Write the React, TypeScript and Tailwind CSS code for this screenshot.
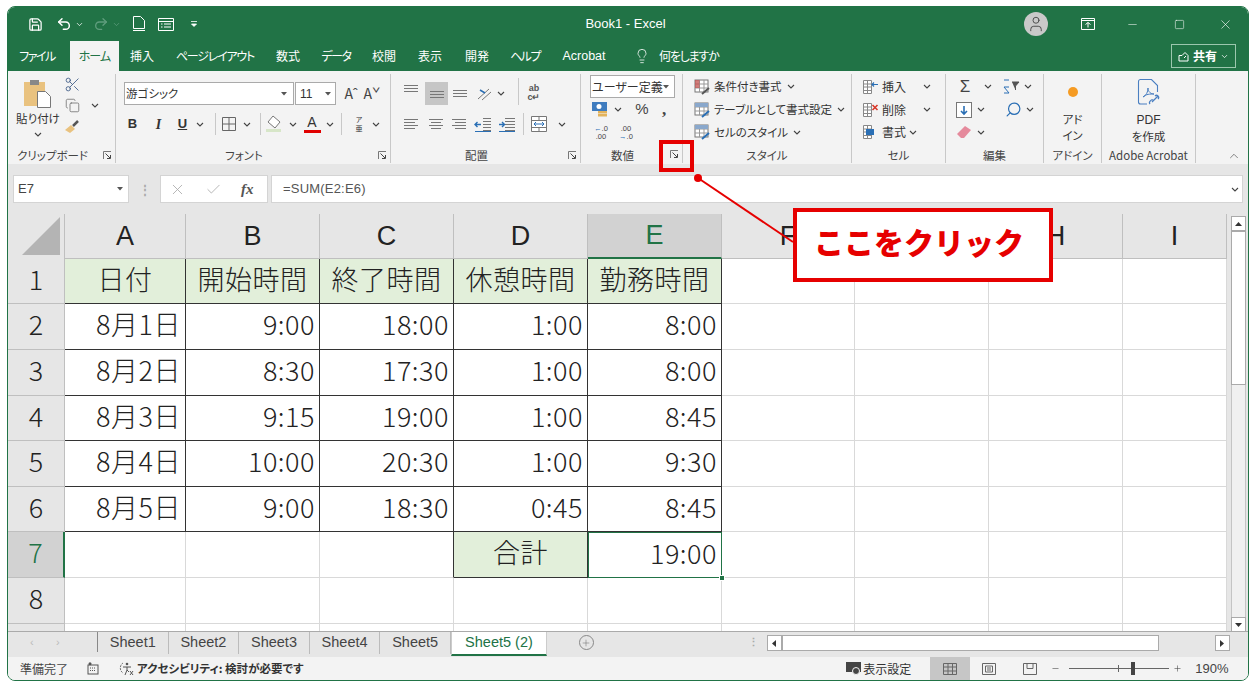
import { ChevronDown, ChevronUp, Copy, Lightbulb, Minus, Plus, Redo2, Save, Scissors, Search, Square, Undo2, User, X, Check } from "lucide-react"

const Chev = ({ className = "" }: { className?: string }) => (
  <svg width="8" height="5" viewBox="0 0 8 5" className={className}>
    <path d="M1 1l3 3 3-3" fill="none" stroke="#444" strokeWidth="1.1" />
  </svg>
)

const Caret = () => (
  <svg width="6" height="4" viewBox="0 0 6 4">
    <path d="M0 0h6L3 3.5z" fill="#555" />
  </svg>
)

const Launcher = () => (
  <svg width="9" height="9" viewBox="0 0 9 9">
    <path d="M.5 8V.5H8" fill="none" stroke="#777" />
    <path d="M2.5 2.5L7 7M7.5 4v3.5H4" fill="none" stroke="#444" />
  </svg>
)

// text-alignment glyph: mode picks the line widths / vertical position
const Lines = ({ mode }: { mode: "top" | "mid" | "bot" | "left" | "center" | "right" }) => {
  const ys = mode === "top" ? [2, 5, 8] : mode === "bot" ? [6, 9, 12] : mode === "mid" ? [4, 7, 10] : [2, 5, 8, 11]
  return (
    <svg width="16" height="14" viewBox="0 0 16 14">
      {ys.map((y, i) => {
        const short = i % 2 === 1 && ["left", "center", "right"].includes(mode)
        const x1 = mode === "right" && short ? 4 : mode === "center" && short ? 3 : 1
        const x2 = mode === "left" && short ? 12 : mode === "center" && short ? 13 : 15
        return <path key={y} d={`M${x1} ${y + 0.5}H${x2}`} stroke="#777" />
      })}
    </svg>
  )
}

const Indent = ({ flip }: { flip?: boolean }) => (
  <svg width="18" height="15" viewBox="0 0 18 15">
    {[1, 4, 7, 10, 13].map((y) => (
      <path key={y} d={`M${flip ? 9 : 7} ${y + 0.5}H17`} stroke="#777" />
    ))}
    <path d={flip ? "M1 7.500h6M3.500 5L1 7.500 3.500 10" : "M1 7.500h5M4 5l2.500 2.500L4 10"} fill="none" stroke="#2a6fb5" strokeWidth="1.4" />
    <path d="M1 14.500h16" stroke="#2a6fb5" />
  </svg>
)

const SheetIcon = ({ kind }: { kind: "cond" | "table" | "style" }) => (
  <svg width="17" height="16" viewBox="0 0 17 16">
    <rect x="1" y="1" width="13" height="12" fill="#fff" stroke="#777" />
    <path d="M1 5h13M1 9h13M5.500 1v12M10 1v12" stroke="#999" />
    {kind === "cond" && <rect x="1" y="1" width="4.500" height="8" fill="#c0504d" opacity=".75" />}
    {kind !== "cond" && <rect x="1" y="1" width="13" height="4" fill="#8aa8cc" />}
    <path d="M8 15l7-6" stroke={kind === "cond" ? "#555" : "#2a6fb5"} strokeWidth="2" />
  </svg>
)

const CellIcon = ({ kind }: { kind: "ins" | "del" | "fmt" }) => (
  <svg width="17" height="16" viewBox="0 0 17 16">
    <path d="M1.500 1.500h8v13h-8zM1.500 5h8M1.500 8h8M1.500 11.500h8M5.500 1.500v13" fill="#fff" stroke="#888" />
    {kind === "ins" && <path d="M10 5.500h6M12 3.500l-2 2 2 2" fill="none" stroke="#2a6fb5" strokeWidth="1.2" />}
    {kind === "del" && <path d="M10.500 3l5 5M15.500 3l-5 5" stroke="#d8392b" strokeWidth="1.600" />}
    {kind === "fmt" && <rect x="4" y="5" width="8" height="6" fill="#2a6fb5" />}
  </svg>
)

function Group({ w, label, launcher, offset, children }: { w: string; label: string; launcher?: boolean; offset?: boolean; children: React.ReactNode }) {
  return (
    <div className={`${w} relative flex h-[89px] shrink-0 flex-col border-r border-[#c8c8c8]`}>
      <div className="flex-1">{children}</div>
      <div className={`relative h-[18px] text-center text-[11.5px] leading-[20px] text-[#444] ${launcher || offset ? "pr-[18px]" : ""}`}>
        {label}
        {launcher && (
          <span className="absolute right-[3px] top-[6px] flex">
            <Launcher />
          </span>
        )}
      </div>
    </div>
  )
}

function Ribbon() {
  return (
    <div className="flex h-[93px] shrink-0 bg-[#f3f3f3] pt-[3px] text-[12px] text-[#333]">
      <Group w="w-[108px]" label="クリップボード" launcher>
        <div className="flex">
          <div className="flex w-[60px] flex-col items-center pt-[5px]">
            <svg width="30" height="30" viewBox="0 0 30 30">
              <rect x="1" y="3" width="21" height="24" fill="#e9c27f" />
              <rect x="7" y="1" width="9" height="5" fill="#888" />
              <path d="M14.500 12.500h8l5 5v11h-13z" fill="#fff" stroke="#777" />
            </svg>
            <div className="mt-[1px] text-[11.5px] leading-[17px]">貼り付け</div>
            <Chev className="mt-[5px]" />
          </div>
          <div className="-ml-[6px] flex w-[20px] flex-col items-center gap-[5px] pt-[2px]">
            <Scissors size={17} strokeWidth={1.2} className="text-[#3c5a85]" />
            <Copy size={15} strokeWidth={1.2} className="text-[#666]" />
            <svg width="17" height="17" viewBox="0 0 17 17">
              <path d="M1 12l6-5 4 4-5 4z" fill="#e9c27f" />
              <path d="M9 8l5-5" stroke="#555" strokeWidth="2.500" />
            </svg>
          </div>
          <div className="flex w-[25px] justify-center pt-[29px]">
            <span>
              <Chev />
            </span>
          </div>
        </div>
      </Group>

      <Group w="w-[275px]" label="フォント" launcher>
        <div className="flex h-[31px] items-end pl-[8px]">
          <div className="flex h-[23px] w-[170px] items-center justify-between border border-[#aaa] bg-white pl-[1px] pr-[6px] text-[11.5px]">
            游ゴシック
            <Caret />
          </div>
          <div className="ml-[1px] flex h-[23px] w-[41px] items-center justify-between border border-[#aaa] bg-white px-[4px] font-['Liberation_Sans'] text-[12px]">
            11
            <Caret />
          </div>
          <div className="flex h-[23px] w-[24px] items-center justify-center pl-[6px] text-[14px] text-[#444]">Aˆ</div>
          <div className="ml-[1px] flex h-[23px] w-[22px] items-center justify-center text-[14px] text-[#444]">Aˇ</div>
        </div>
        <div className="mt-[7px] flex h-[24px] items-center pl-[8px] font-['Liberation_Sans'] text-[#333]">
          <span className="w-[17px] text-center text-[13px] font-bold">B</span>
          <span className="ml-[9px] w-[17px] text-center font-['Liberation_Serif'] text-[14px] font-bold italic">I</span>
          <span className="ml-[7px] w-[17px] text-center text-[13px] font-bold underline">U</span>
          <Chev className="ml-[5px]" />
          <span className="ml-[11px] h-[22px] border-l border-[#c8c8c8]" />
          <svg width="16" height="16" viewBox="0 0 16 16" className="ml-[5px]">
            <path d="M1.500 1.500h13v13h-13zM8 1.500v13M1.500 8h13" fill="none" stroke="#666" />
          </svg>
          <Chev className="ml-[6px]" />
          <span className="ml-[9px] h-[22px] border-l border-[#c8c8c8]" />
          <svg width="18" height="18" viewBox="0 0 18 18" className="ml-[4px]">
            <path d="M8 1l7 6-5 6-7-6z" fill="#fff" stroke="#777" />
            <path d="M1 15.500h15" stroke="#d7e6c8" strokeWidth="3" />
          </svg>
          <Chev className="ml-[6px]" />
          <span className="ml-[7px] flex w-[16px] flex-col items-center text-[14px] leading-[14px]">
            A
            <span className="mt-[1px] h-[3px] w-[17px] bg-[#e00000]" />
          </span>
          <Chev className="ml-[6px]" />
          <span className="ml-[7px] h-[22px] border-l border-[#c8c8c8]" />
          <span className="ml-[11px] w-[12px] text-center font-['Noto_Sans_CJK_JP'] text-[7px] leading-[9px]">
            ア<br />亜
          </span>
          <Chev className="ml-[7px]" />
        </div>
      </Group>

      <Group w="w-[190px]" label="配置" launcher>
        <div className="flex h-[31px] items-end pl-[11px]">
          <span className="flex h-[23px] w-[18px] justify-center pt-[1px]">
            <Lines mode="top" />
          </span>
          <span className="ml-[5px] flex h-[23px] w-[23px] items-center justify-center bg-[#c6c6c6]">
            <Lines mode="mid" />
          </span>
          <span className="ml-[3px] flex h-[21px] w-[18px] justify-center">
            <Lines mode="bot" />
          </span>
          <span className="ml-[7px] flex h-[23px] w-[18px] items-center justify-center text-[11px] text-[#777]">
            <svg width="18" height="14" viewBox="0 0 18 14">
              <path d="M2 12l11-10M6 13l9-8" stroke="#777" />
              <path d="M4 3l5 3" stroke="#2a6fb5" strokeWidth="1.500" />
            </svg>
          </span>
          <span className="flex h-[23px] items-center pl-[3px]">
            <Chev />
          </span>
          <span className="ml-[13px] h-[27px] border-l border-[#c8c8c8]" />
          <span className="ml-[7px] w-[16px] pb-[3px] text-center font-['Liberation_Sans'] text-[9px] font-bold leading-[9px] text-[#555]">
            ab
            <br />c↵
          </span>
        </div>
        <div className="mt-[7px] flex h-[24px] items-center pl-[11px]">
          <span className="flex w-[18px] justify-center">
            <Lines mode="left" />
          </span>
          <span className="ml-[7px] flex w-[18px] justify-center">
            <Lines mode="center" />
          </span>
          <span className="ml-[5px] flex w-[18px] justify-center">
            <Lines mode="right" />
          </span>
          <span className="ml-[6px] flex">
            <Indent flip />
          </span>
          <span className="ml-[6px] flex">
            <Indent />
          </span>
          <span className="ml-[7px] h-[22px] border-l border-[#c8c8c8]" />
          <svg width="16" height="16" viewBox="0 0 16 16" className="ml-[7px]">
            <path d="M.500.500h15v15H.500zM.500 4.500h15M.500 11.500h15M8 .500v4M8 11.500v4" fill="#fff" stroke="#777" />
            <path d="M3 8h10M5 6L3 8l2 2M11 6l2 2-2 2" fill="none" stroke="#2a6fb5" />
          </svg>
          <Chev className="ml-[11px]" />
        </div>
      </Group>

      <Group w="w-[102px]" label="数値" offset>
        <div className="flex h-[24px] items-end pl-[9px]">
          <div className="flex h-[23px] w-[85px] items-center justify-between border border-[#aaa] bg-white pl-[1px] pr-[5px] text-[12px]">
            ユーザー定義
            <Caret />
          </div>
        </div>
        <div className="flex h-[23px] items-center pl-[10px]">
          <svg width="18" height="17" viewBox="0 0 18 17">
            <rect x="1" y="1" width="15" height="9" fill="#3f7cbf" />
            <circle cx="8" cy="5.500" r="2.500" fill="#fff" />
            <rect x="7" y="10" width="9" height="2.500" fill="#e3b35b" />
            <rect x="7" y="13" width="9" height="2.500" fill="#e3b35b" />
          </svg>
          <Chev className="ml-[5px]" />
          <span className="ml-[8px] w-[24px] text-center font-['Liberation_Sans'] text-[15px] text-[#444]">%</span>
          <span className="ml-[8px] font-['Liberation_Serif'] text-[17px] font-bold leading-[17px] text-[#444]">,</span>
        </div>
        <div className="flex h-[23px] items-center pl-[10px] font-['Liberation_Sans'] text-[7.500px] leading-[8px] text-[#444]">
          <span className="w-[20px] text-center">
            <span className="text-[#2a6fb5]">←</span>.0
            <br />
            .00
          </span>
          <span className="ml-[5px] w-[20px] text-center">
            .00
            <br />
            <span className="text-[#2a6fb5]">→</span>.0
          </span>
        </div>
        <span className="absolute bottom-[4px] right-[3px] flex">
          <Launcher />
        </span>
      </Group>

      <Group w="w-[169px]" label="スタイル">
        <div className="flex flex-col pl-[11px] pt-[1px] text-[11.5px] leading-[23px]">
          <div className="flex h-[23px] items-center gap-[3px]">
            <SheetIcon kind="cond" />
            条件付き書式
            <Chev className="ml-[2px]" />
          </div>
          <div className="flex h-[23px] items-center gap-[3px]">
            <SheetIcon kind="table" />
            テーブルとして書式設定
            <Chev className="ml-[2px]" />
          </div>
          <div className="flex h-[22px] items-center gap-[3px]">
            <SheetIcon kind="style" />
            セルのスタイル
            <Chev className="ml-[2px]" />
          </div>
        </div>
      </Group>

      <Group w="w-[94px]" label="セル">
        <div className="flex flex-col pl-[10px] pt-[1px] text-[12px]">
          <div className="flex h-[23px] items-center">
            <CellIcon kind="ins" />
            <span className="ml-[3px] w-[41px]">挿入</span>
            <Chev />
          </div>
          <div className="flex h-[23px] items-center">
            <CellIcon kind="del" />
            <span className="ml-[3px] w-[41px]">削除</span>
            <Chev />
          </div>
          <div className="flex h-[22px] items-center">
            <CellIcon kind="fmt" />
            <span className="ml-[3px]">書式</span>
            <Chev className="ml-[3px]" />
          </div>
        </div>
      </Group>

      <Group w="w-[98px]" label="編集">
        <div className="flex flex-col pl-[10px] pt-[1px]">
          <div className="flex h-[23px] items-center">
            <span className="w-[18px] text-center font-['Liberation_Sans'] text-[17px] leading-[17px] text-[#444]">Σ</span>
            <Chev className="ml-[10px]" />
            <svg width="20" height="16" viewBox="0 0 20 16" className="ml-[10px]">
              <path d="M10 3h7l-3.500 4v4" fill="#555" stroke="#555" />
              <path d="M2 1h5M2 14h5L2 8h5" fill="none" stroke="#2a6fb5" />
            </svg>
            <Chev className="ml-[2px]" />
          </div>
          <div className="flex h-[23px] items-center">
            <svg width="16" height="16" viewBox="0 0 16 16">
              <rect x=".5" y=".5" width="15" height="15" fill="#fff" stroke="#777" />
              <path d="M8 4v8M5 9l3 3 3-3" fill="none" stroke="#2a6fb5" strokeWidth="1.600" />
            </svg>
            <Chev className="ml-[5px]" />
            <Search size={17} strokeWidth={1.7} className="ml-[20px] scale-x-[-1] text-[#2a6fb5]" />
            <Chev className="ml-[4px]" />
          </div>
          <div className="flex h-[22px] items-center">
            <svg width="16" height="14" viewBox="0 0 16 14">
              <path d="M1 9l8-8 6 4-7 8H5z" fill="#e58a9c" />
            </svg>
            <Chev className="ml-[5px]" />
          </div>
        </div>
      </Group>

      <Group w="w-[58px]" label="アドイン">
        <div className="flex flex-col items-center pt-[13px] text-[11.500px] leading-[16px]">
          <span className="h-[10px] w-[10px] rounded-full bg-[#f59b23]" />
          <span className="mt-[14px]">アド</span>
          <span>イン</span>
        </div>
      </Group>

      <Group w="w-[94px]" label="Adobe Acrobat">
        <div className="flex flex-col items-center pt-[4px] text-[11.500px] leading-[16px]">
          <svg width="28" height="29" viewBox="0 0 28 29">
            <path d="M12 26H5.500a2 2 0 0 1-2-2V3.500a2 2 0 0 1 2-2h11l6 6V14" fill="none" stroke="#4a7fc1" strokeWidth="1.100" />
            <path d="M8 19c3-1 5-5 5-9 0 4 3 6 6 6-4 0-8 0-11 3z" fill="none" stroke="#4a7fc1" />
            <path d="M17 24l6-6m-8 8c-2-2 2-5 3-4m5-1c2-2-1-5-3-3" fill="none" stroke="#4a7fc1" strokeWidth="1.200" />
          </svg>
          <span className="mt-[5px] font-['Liberation_Sans'] text-[12px]">PDF</span>
          <span>を作成</span>
        </div>
      </Group>

      <div className="flex flex-1 items-end justify-end pb-[1px] pr-[7px]">
        <ChevronUp size={14} strokeWidth={1.2} className="text-[#555]" />
      </div>
    </div>
  )
}

const columns = ["A", "B", "C", "D", "E", "F", "G", "H", "I"]

type Row = { date: string; values: string[] }
const rows: Row[] = [
  { date: "8月1日", values: ["9:00", "18:00", "1:00", "8:00"] },
  { date: "8月2日", values: ["8:30", "17:30", "1:00", "8:00"] },
  { date: "8月3日", values: ["9:15", "19:00", "1:00", "8:45"] },
  { date: "8月4日", values: ["10:00", "20:30", "1:00", "9:30"] },
  { date: "8月5日", values: ["9:00", "18:30", "0:45", "8:45"] },
]

const rowHeader = "flex items-center justify-center border-b border-r border-[#bfbfbf] bg-[#e6e6e6] pb-[4px]"
const blank = "border-b border-r border-[#d9d9d9] bg-white"
const dark = "flex items-center border-b border-r border-[#333] bg-white pb-[4px] pr-[4px] tracking-[0.5px]"

function Sheet() {
  return (
    <div className="grid h-[417px] shrink-0 grid-cols-[57px_121px_134px_134px_134px_134px_133px_134px_134px_104px_1fr] grid-rows-[45px_45px_46px_46px_45px_46px_45px_46px_46px_7px] bg-[#e6e6e6] text-[27px] font-light text-[#222]">
      <div className="flex items-end justify-end border-r border-[#bfbfbf] pb-[4px] pr-[4px]">
        <span className="h-0 w-0 border-b-[38px] border-l-[38px] border-b-[#b4b4b4] border-l-transparent" />
      </div>
      {columns.map((c) => (
        <div
          key={c}
          className={
            c === "E"
              ? "flex items-center justify-center border-b-2 border-r border-b-[#217346] border-r-[#bfbfbf] bg-[#d2d2d2] font-['Liberation_Sans'] text-[#217346]"
              : "flex items-center justify-center border-b border-r border-[#bfbfbf] font-['Liberation_Sans']"
          }
        >
          {c}
        </div>
      ))}
      <div className="row-span-10 relative border-l border-[#e6e6e6]">
        <div className="absolute left-[3px] top-[2px] flex h-[15px] w-[15px] items-center justify-center border border-[#aaa] bg-white">
          <svg width="7" height="4" viewBox="0 0 7 4"><path d="M0 4h7L3.500 0z" fill="#333" /></svg>
        </div>
        <div className="absolute left-[3px] top-[18px] h-[385px] w-[15px] border-x border-[#c4c4c4] bg-[#f0f0f0]" />
        <div className="absolute left-[3px] top-[17px] h-[154px] w-[15px] border border-[#aaa] bg-white" />
        <div className="absolute bottom-[-1px] left-[3px] flex h-[15px] w-[15px] items-center justify-center border border-[#aaa] bg-white">
          <svg width="7" height="4" viewBox="0 0 7 4"><path d="M0 0h7L3.500 4z" fill="#333" /></svg>
        </div>
      </div>

      <div className={rowHeader}>1</div>
      {["日付", "開始時間", "終了時間", "休憩時間", "勤務時間"].map((h) => (
        <div key={h} className="flex items-center justify-center border-b border-r border-[#333] bg-[#e2efda] pb-[4px] tracking-[0.5px]">
          {h}
        </div>
      ))}
      {[0, 1, 2, 3].map((i) => (
        <div key={i} className={blank} />
      ))}

      {rows.map((r, i) => (
        <div key={r.date} className="contents">
          <div className={rowHeader}>{i + 2}</div>
          <div className={`${dark} justify-end border-l-[#333]`}>{r.date}</div>
          {r.values.map((v, j) => (
            <div key={j} className={`${dark} justify-end`}>
              {v}
            </div>
          ))}
          {[0, 1, 2, 3].map((k) => (
            <div key={k} className={blank} />
          ))}
        </div>
      ))}

      <div className="flex items-center justify-center border-b border-r-2 border-b-[#bfbfbf] border-r-[#217346] bg-[#d2d2d2] pb-[4px] text-[#217346]">7</div>
      <div className={blank} />
      <div className={blank} />
      <div className="border-b border-r border-b-[#d9d9d9] border-r-[#333] bg-white" />
      <div className="flex items-center justify-center border-b border-r border-[#333] bg-[#e2efda] pb-[4px] tracking-[0.5px]">合計</div>
      <div className="relative flex items-center justify-end border border-[#217346] bg-white pb-[4px] pr-[4px] tracking-[0.5px]">
        19:00
        <span className="absolute bottom-[-4px] right-[-4px] h-[6px] w-[6px] border border-white bg-[#217346]" />
      </div>
      {[0, 1, 2, 3].map((k) => (
        <div key={k} className={blank} />
      ))}

      <div className={rowHeader}>8</div>
      {[0, 1, 2, 3, 4, 5, 6, 7, 8].map((k) => (
        <div key={k} className={blank} />
      ))}
      <div className="border-r border-[#bfbfbf]" />
      {[0, 1, 2, 3, 4, 5, 6, 7, 8].map((k) => (
        <div key={k} className="border-r border-[#d9d9d9] bg-white" />
      ))}
    </div>
  )
}

const sheetNames = ["Sheet1", "Sheet2", "Sheet3", "Sheet4", "Sheet5"]

export default function App() {
  return (
    <div className="relative h-[686px] w-[1255px] overflow-hidden bg-white font-['Noto_Sans_CJK_JP',sans-serif] [font-feature-settings:'palt']">
      <div className="ml-[7px] mt-[6px] flex h-[675px] w-[1242px] flex-col overflow-hidden rounded-[8px] border border-[#217346]">
        {/* title bar */}
        <div className="relative flex h-[34px] shrink-0 items-center bg-[#217346] text-white">
          <Save size={15} strokeWidth={2} className="ml-[20px]" />
          <Undo2 size={16} strokeWidth={2.200} className="ml-[13px]" />
          <ChevronDown size={9} className="ml-[3px]" />
          <Redo2 size={16} strokeWidth={2} className="ml-[9px] text-[#5f9d7d]" />
          <ChevronDown size={9} className="ml-[3px] text-[#5f9d7d]" />
          <svg width="14" height="16" viewBox="0 0 14 16" className="ml-[11px]">
            <path d="M1.500.5h7l4 4v8h-11zM1 14.500h12" fill="none" stroke="#fff" />
          </svg>
          <svg width="16" height="13" viewBox="0 0 16 13" className="ml-[12px]">
            <path d="M.5.500h15v12H.500zM.500 3.500h15M6 6h7M6 9h7M3 6h1.500M3 9h1.500" fill="none" stroke="#fff" />
          </svg>
          <svg width="6" height="6" viewBox="0 0 6 6" className="ml-[17px]">
            <path d="M0 .500h6M.500 3h5L3 5.500z" stroke="#fff" fill="#fff" strokeWidth=".8" />
          </svg>
          <div className="flex-1 pl-[30px] text-center font-['Liberation_Sans'] text-[13px]">Book1 - Excel</div>
          <div className="mr-[15px] flex h-[24px] w-[24px] items-center justify-center rounded-full bg-[#c9c9c9]">
            <User size={18} strokeWidth={1.2} className="text-[#444]" />
          </div>
          <svg width="14" height="12" viewBox="0 0 14 12" className="ml-[18px]">
            <path d="M.5.500h13v11H.500zM.500 2.500h13M7 9.500V4.500M4.500 6.500L7 4.500l2.500 2" fill="none" stroke="#fff" />
          </svg>
          <Minus size={13} strokeWidth={1} className="ml-[31px]" />
          <Square size={11} strokeWidth={1.2} className="ml-[35px]" />
          <X size={15} strokeWidth={1} className="ml-[33px] mr-[15px]" />
        </div>

        {/* ribbon tabs */}
        <div className="flex h-[30px] shrink-0 bg-[#217346] text-[12px] leading-[30px] text-white">
          <div className="w-[58px] text-center tracking-[-1.5px]">ファイル</div>
          <div className="ml-[4px] w-[49px] bg-[#f3f3f3] text-center tracking-[-1px] text-[#217346]">ホーム</div>
          <div className="w-[46px] text-center">挿入</div>
          <div className="w-[100px] text-center tracking-[-1.2px]">ページレイアウト</div>
          <div className="w-[46px] text-center">数式</div>
          <div className="w-[50px] text-center tracking-[-1.5px]">データ</div>
          <div className="w-[46px] text-center">校閲</div>
          <div className="w-[46px] text-center">表示</div>
          <div className="w-[48px] text-center">開発</div>
          <div className="w-[48px] text-center tracking-[-1.5px]">ヘルプ</div>
          <div className="w-[70px] text-center font-['Liberation_Sans'] text-[12.5px]">Acrobat</div>
          <Lightbulb size={16} strokeWidth={1.200} className="ml-[15px] mt-[7px]" />
          <div className="ml-[9px] tracking-[-1.2px]">何をしますか</div>
          <div className="ml-auto mr-[12px] mt-[3px] flex h-[24px] w-[65px] items-center justify-center gap-[3px] border border-[#9cc7ae] font-bold leading-none">
            <svg width="12" height="12" viewBox="0 0 12 12">
              <path d="M1 5.500h3l3-3 3 3v5.500H1zM6 8l2-2" fill="none" stroke="#fff" />
            </svg>
            共有
            <ChevronDown size={9} />
          </div>
        </div>

        <Ribbon />

        {/* formula bar */}
        <div className="flex h-[50px] shrink-0 bg-[#e6e6e6] pl-[5px] pr-[5px] pt-[11px]">
          <div className="flex h-[28px] w-[116px] items-center justify-between border border-[#d4d4d4] bg-white pl-[4px] pr-[5px] font-['Liberation_Sans'] text-[13px] text-[#444]">
            E7
            <Caret />
          </div>
          <div className="flex h-[28px] w-[31px] items-center justify-center text-[12px] font-bold leading-none text-[#aaa]">⋮</div>
          <div className="flex h-[28px] w-[108px] items-center border border-[#d4d4d4] bg-white">
            <X size={17} strokeWidth={1.200} className="ml-[8px] text-[#aaa]" />
            <Check size={17} strokeWidth={1.200} className="ml-[19px] text-[#aaa]" />
            <span className="ml-[19px] font-['Liberation_Serif'] text-[15px] font-bold italic text-[#555]">fx</span>
          </div>
          <div className="ml-[3px] flex h-[28px] flex-1 items-center justify-between border border-[#d4d4d4] bg-white pl-[11px] pr-[3px] font-['Liberation_Sans'] text-[13px] tracking-[0.2px] text-[#555]">
            =SUM(E2:E6)
            <Chev />
          </div>
        </div>

        <Sheet />

        {/* sheet tabs + horizontal scrollbar */}
        <div className="flex h-[26px] shrink-0 items-start border-t border-[#aaa] bg-[#e6e6e6] font-['Liberation_Sans'] text-[14.5px] text-[#444]">
          <div className="flex h-[20px] w-[90px] items-center border-r border-[#888] pl-[22px] text-[11px] text-[#bbb]">
            <span className="w-[26px]">‹</span>
            <span>›</span>
          </div>
          {sheetNames.map((s) => (
            <div key={s} className="flex h-[22px] w-[70.6px] items-center justify-center border-r border-[#bbb]">
              {s}
            </div>
          ))}
          <div className="flex h-[24px] w-[96px] items-center justify-center border-b-2 border-x border-[#217346] border-x-[#ccc] border-t-0 bg-white text-[#217346]">Sheet5 (2)</div>
          <div className="ml-[32px] mt-[3px] flex h-[15px] w-[15px] items-center justify-center rounded-full border border-[#888]">
            <Plus size={10} strokeWidth={1.200} className="text-[#666]" />
          </div>
          <div className="ml-[154px] mt-[5px] text-[11px] font-bold leading-none text-[#aaa]">⋮</div>
          <div className="ml-[8px] mt-[3px] flex h-[16px] w-[15px] items-center justify-center border border-[#aaa] bg-white">
            <svg width="4" height="7" viewBox="0 0 4 7"><path d="M4 0v7L0 3.500z" fill="#333" /></svg>
          </div>
          <div className="mt-[3px] h-[16px] w-[377px] border border-[#aaa] bg-white" />
          <div className="ml-[56px] mt-[3px] flex h-[16px] w-[15px] items-center justify-center border border-[#aaa] bg-white">
            <svg width="4" height="7" viewBox="0 0 4 7"><path d="M0 0v7l4-3.500z" fill="#333" /></svg>
          </div>
        </div>

        {/* status bar */}
        <div className="flex min-h-0 flex-1 items-center bg-[#f3f3f3] text-[12px] text-[#444]">
          <span className="ml-[12px]">準備完了</span>
          <svg width="12" height="13" viewBox="0 0 12 13" className="ml-[19px]">
            <rect x="1" y="3" width="10" height="9" fill="none" stroke="#555" />
            <path d="M3 6h6M3 8.500h6" stroke="#555" strokeDasharray="1 1" />
            <circle cx="3" cy="1.800" r="1.500" fill="#555" />
          </svg>
          <svg width="16" height="15" viewBox="0 0 16 15" className="ml-[19px]">
            <path d="M5 2A6 6 0 0 0 5 12" fill="none" stroke="#666" strokeDasharray="2 1" />
            <circle cx="9" cy="3" r="1.300" fill="#555" />
            <path d="M5 6h8M9 6v3M7 14l2-5 2 2M12 10l3 4M15 10l-3 4" fill="none" stroke="#555" />
          </svg>
          <span className="ml-[3px] text-[11.500px] font-bold text-[#333]">アクセシビリティ: 検討が必要です</span>
          <svg width="16" height="15" viewBox="0 0 16 15" className="ml-[543px]">
            <rect x="0" y="1" width="15" height="10" fill="#444" />
            <circle cx="10" cy="10" r="3.500" fill="#444" stroke="#f3f3f3" />
          </svg>
          <span className="ml-[1px] text-[#333]">表示設定</span>
          <div className="ml-[19px] flex h-full w-[40px] items-center justify-center bg-[#c6c6c6]">
            <svg width="14" height="12" viewBox="0 0 14 12">
              <path d="M.5.500h13v11H.500zM.500 4h13M.500 8h13M5 .500v11M9.500.500v11" fill="none" stroke="#666" />
            </svg>
          </div>
          <svg width="14" height="12" viewBox="0 0 14 12" className="ml-[12px]">
            <path d="M.5.500h13v11H.500zM3.500 3h7v6h-7zM5 5h4M5 7h4" fill="none" stroke="#666" />
          </svg>
          <svg width="14" height="12" viewBox="0 0 14 12" className="ml-[27px]">
            <path d="M.5.500h13v11H.500zM4 .500v5h6v-5" fill="none" stroke="#666" />
          </svg>
          <Minus size={9} strokeWidth={1.500} className="ml-[14px]" />
          <div className="relative ml-[9px] h-px w-[100px] bg-[#666]">
            <span className="absolute left-[49px] top-[-3px] h-[7px] w-px bg-[#666]" />
            <span className="absolute left-[62px] top-[-6px] h-[13px] w-[4px] bg-[#444]" />
          </div>
          <Plus size={9} strokeWidth={1.500} className="ml-[4px]" />
          <span className="ml-[13px] font-['Liberation_Sans'] text-[13px]">190%</span>
        </div>
      </div>

      {/* annotation on top of the screenshot */}
      <div className="absolute left-[659px] top-[140px] h-[32px] w-[35px] border-[4px] border-[#e60000]" />
      <svg width="110" height="80" viewBox="0 0 110 80" className="absolute left-[690px] top-[170px]">
        <circle cx="8" cy="8" r="4" fill="#e60000" />
        <path d="M8 8L103 72" stroke="#e60000" strokeWidth="2" />
      </svg>
      <div className="absolute left-[793px] top-[208px] flex h-[74px] w-[260px] items-center justify-center border-[4px] border-[#e60000] bg-white pb-[8px] pr-[8px] text-[30px] font-black text-[#e60000] [font-feature-settings:normal]">
        ここをクリック
      </div>
    </div>
  )
}
